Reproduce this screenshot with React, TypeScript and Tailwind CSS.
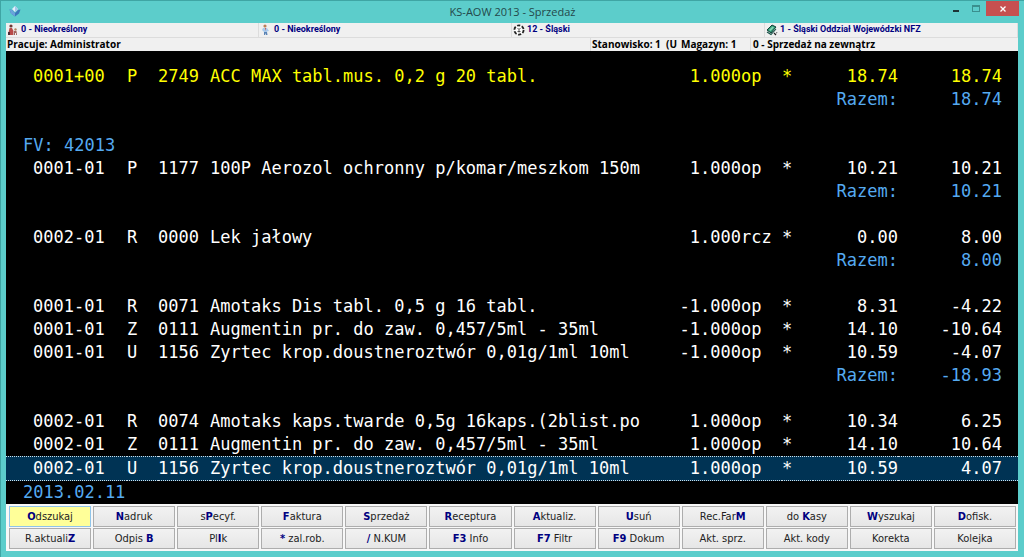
import React from 'react'
import clsx from 'clsx'

type ItemRow = {
  kind: 'item', doc: string, type: string, code: string, name: string,
  qty: string, unit: string, price: string, total: string, tone?: 'new' | 'selected'
}
type SumRow = { kind: 'sum', total: string }
type LabelRow = { kind: 'label', text: string }
type Row = ItemRow | SumRow | LabelRow

const item = (
  doc: string, type: string, code: string, name: string, qty: string,
  unit: string, price: string, total: string, tone?: 'new' | 'selected'
): ItemRow => ({ kind: 'item', doc, type, code, name, qty, unit, price, total, tone })
const sum = (total: string): SumRow => ({ kind: 'sum', total })
const label = (text: string): LabelRow => ({ kind: 'label', text })

const rows: Row[] = [
  item('0001+00', 'P', '2749', 'ACC MAX tabl.mus. 0,2 g 20 tabl.', '1.000', 'op', '18.74', '18.74', 'new'),
  sum('18.74'),
  label(''),
  label('FV: 42013'),
  item('0001-01', 'P', '1177', '100P Aerozol ochronny p/komar/meszkom 150m', '1.000', 'op', '10.21', '10.21'),
  sum('10.21'),
  label(''),
  item('0002-01', 'R', '0000', 'Lek jałowy', '1.000', 'rcz', '0.00', '8.00'),
  sum('8.00'),
  label(''),
  item('0001-01', 'R', '0071', 'Amotaks Dis tabl. 0,5 g 16 tabl.', '-1.000', 'op', '8.31', '-4.22'),
  item('0001-01', 'Z', '0111', 'Augmentin pr. do zaw. 0,457/5ml - 35ml', '-1.000', 'op', '14.10', '-10.64'),
  item('0001-01', 'U', '1156', 'Zyrtec krop.doustneroztwór 0,01g/1ml 10ml', '-1.000', 'op', '10.59', '-4.07'),
  sum('-18.93'),
  label(''),
  item('0002-01', 'R', '0074', 'Amotaks kaps.twarde 0,5g 16kaps.(2blist.po', '1.000', 'op', '10.34', '6.25'),
  item('0002-01', 'Z', '0111', 'Augmentin pr. do zaw. 0,457/5ml - 35ml', '1.000', 'op', '14.10', '10.64'),
  item('0002-01', 'U', '1156', 'Zyrtec krop.doustneroztwór 0,01g/1ml 10ml', '1.000', 'op', '10.59', '4.07', 'selected'),
  label('2013.02.11'),
]

// [before, hotkey, after]
const actions: [string, string, string][] = [
  ['', 'O', 'dszukaj'], ['', 'N', 'adruk'], ['s', 'P', 'ecyf.'], ['', 'F', 'aktura'],
  ['', 'S', 'przedaż'], ['', 'R', 'eceptura'], ['', 'A', 'ktualiz.'], ['', 'U', 'suń'],
  ['Rec.Far', 'M', ''], ['do ', 'K', 'asy'], ['', 'W', 'yszukaj'], ['', 'D', 'ofisk.'],
  ['R.aktuali', 'Z', ''], ['Odpis ', 'B', ''], ['Pl', 'I', 'k'], ['', '*', ' zal.rob.'],
  ['', '/', ' N.KUM'], ['', 'F3', ' Info'], ['', 'F7', ' Filtr'], ['', 'F9', ' Dokum'],
  ['Akt. sprz.', '', ''], ['Akt. kody', '', ''], ['Korekta', '', ''], ['Kolejka', '', ''],
]

const AppIcon = () => (
  <svg viewBox="0 0 12 12" className="h-3 w-3">
    <path d="M0.5 4.5 3 5 6 8 9 5 11.5 4.5 10 8.5 6 11.5 2 8.5Z" fill="#3b76bb" />
    <path d="M0.5 4.5 3 5 6 8V11.5L2 8.5Z" fill="#6aa3db" />
    <path d="M6 1 9 4 6 7 3 4Z" fill="#e4effb" />
    <path d="M6 1 9 4 6 7Z" fill="#a5c6ea" />
  </svg>
)

const PatientIcon = () => (
  <svg viewBox="0 0 12 12" className="h-3 w-3">
    <circle cx="4" cy="2" r="1.6" fill="#6d3a35" />
    <path d="M2.5 4H5L6.5 7 6 11H1Z" fill="#b94a48" />
    <path d="M1 8H3V11H1Z" fill="#4c2b38" />
    <circle cx="8.5" cy="5.5" r="1.2" fill="#b28562" />
    <path d="M7 7H9.5L10 11H9V9H8V11H6.5Z" fill="#a1615b" />
  </svg>
)

const DoctorIcon = () => (
  <svg viewBox="0 0 12 12" className="h-3 w-3">
    <circle cx="5" cy="2" r="1.6" fill="#b98058" />
    <path d="M3 4H7L9 7 7 7.5V8H4L2 6Z" fill="#a9cbed" />
    <path d="M5 4 6 4 5.6 7Z" fill="#c8514b" />
    <path d="M4 8H7L7.5 11H6L5.6 9 5 11H4Z" fill="#5b84b6" />
  </svg>
)

const RegionIcon = () => (
  <svg viewBox="0 0 12 12" className="h-3 w-3">
    <circle cx="6" cy="6" r="4.6" fill="#fff" stroke="#222" strokeWidth="1.8" strokeDasharray="3.2 1.6" />
    <path d="M4.5 4 6 5.5 7.5 4M6 5.5V8.5M4.5 7.5H7.5" fill="none" stroke="#444" strokeWidth="0.9" />
  </svg>
)

const FundIcon = () => (
  <svg viewBox="0 0 12 12" className="h-3 w-3">
    <path d="M1 6 6 1 10 3 5 9Z" fill="#2f9b76" stroke="#123f38" strokeWidth="1" />
    <path d="M3 6 6.5 2.6 8 3.4 4.6 7Z" fill="#86d3b1" />
    <path d="M1 8 5 10.5 10 5" fill="none" stroke="#175248" strokeWidth="1.1" />
    <path d="M8 9 10 11M10.5 8.5 11 9" stroke="#222" strokeWidth="1.2" />
  </svg>
)

const InfoCell = ({ icon, text } : { icon: React.ReactNode, text: string }) => (
  <div className="flex items-center gap-0.5 border-r border-b border-[#dcdcdc] pl-px font-['Roboto',sans-serif] text-[9px] text-[#000080]">
    {icon}
    <span className="whitespace-nowrap">{text}</span>
  </div>
)

const TitleBar = () => (
  <header className="grid h-[22px] grid-cols-[1fr_auto_1fr]">
    <div className="pt-1 pl-2"><AppIcon /></div>
    <h1 className="font-['Open_Sans',sans-serif] text-[11px] leading-[22px] text-[#24484a]">KS-AOW 2013 - Sprzedaż</h1>
    <div className="flex h-[15px] justify-end pr-[5px]">
      <button aria-label="Minimalizuj" className="flex w-5 items-end justify-center pb-1">
        <span className="h-0.5 w-1.5 bg-[#1c3435]"></span>
      </button>
      <button aria-label="Maksymalizuj" className="flex w-5 items-center justify-center">
        <span className="h-[7px] w-2 border border-t-2 border-[#3a8f8e]"></span>
      </button>
      <button aria-label="Zamknij" className="flex w-[33px] items-center justify-center bg-[#c75050]">
        <svg viewBox="0 0 6 6" className="h-1.5 w-1.5">
          <path d="M0.5 0.5 5.5 5.5M5.5 0.5 0.5 5.5" stroke="#fff" strokeWidth="1.3" />
        </svg>
      </button>
    </div>
  </header>
)

const ListRow = ({ row } : { row: Row }) => {
  if (row.kind == 'label') {
    return (
      <tr className="h-[23px] text-[#55aaf0]">
        <td colSpan={9} className="pl-[17px]">{row.text}</td>
      </tr>
    )
  }
  if (row.kind == 'sum') {
    return (
      <tr className="h-[23px] text-right text-[#55aaf0]">
        <td colSpan={7}></td>
        <td>Razem:</td>
        <td className="pr-4">{row.total}</td>
      </tr>
    )
  }
  return (
    <tr className={clsx('h-[23px]',
      row.tone == 'new' && 'text-[#ffff00]',
      row.tone == 'selected' && 'bg-[#003354] [&>td]:border-y [&>td]:border-dotted [&>td]:border-[#d0e0ea]'
    )}>
      <td className="pl-[27px]">{row.doc}</td>
      <td>{row.type}</td>
      <td>{row.code}</td>
      <td>{row.name}</td>
      <td className="text-right">{row.qty}</td>
      <td>{row.unit}</td>
      <td>*</td>
      <td className="text-right">{row.price}</td>
      <td className="pr-4 text-right">{row.total}</td>
    </tr>
  )
}

const App = () => {
  return (
    <div className="flex min-h-screen flex-col border-t border-l border-[#3fa5a4] bg-[#5ccdcb] font-['DejaVu_Sans_Condensed','DejaVu_Sans',sans-serif]">
      <TitleBar />
      <div className="mr-1.5 mb-1.5 ml-[5px] flex flex-1 flex-col bg-[#f0f0f0]">
        <section className="font-['Open_Sans',sans-serif] font-bold">
          <div className="grid h-[15px] grid-cols-4">
            <InfoCell icon={<PatientIcon />} text="0 - Nieokreślony" />
            <InfoCell icon={<DoctorIcon />} text="0 - Nieokreślony" />
            <InfoCell icon={<RegionIcon />} text="12 - Śląski" />
            <InfoCell icon={<FundIcon />} text="1 - Śląski Oddział Wojewódzki NFZ" />
          </div>
          <div className="grid h-[13px] grid-cols-[1fr_89px_71px_268px] text-[10px] leading-[13px] whitespace-nowrap text-black">
            <p className="pl-px">Pracuje: Administrator</p>
            <p className="border-l border-[#dcdcdc] pl-px whitespace-pre">Stanowisko: 1  (U</p>
            <p className="pl-0.5">Magazyn: 1</p>
            <p className="border-l border-[#dcdcdc] pl-0.5">0 - Sprzedaż na zewnątrz</p>
          </div>
        </section>

        <main className="flex-1 bg-black pt-3.5">
          <table className="w-full table-fixed border-separate border-spacing-0 font-['DejaVu_Sans_Mono',monospace] text-[17px] leading-[23px] whitespace-pre text-white">
            <colgroup>
              <col className="w-[121px]" />
              <col className="w-[31px]" />
              <col className="w-[52px]" />
              <col />
              <col className="w-[71px]" />
              <col className="w-[41px]" />
              <col className="w-[31px]" />
              <col className="w-[85px]" />
              <col className="w-[120px]" />
            </colgroup>
            <tbody>
              {rows.map((row, i) => <ListRow key={i} row={row} />)}
            </tbody>
          </table>
        </main>

        <nav className="grid grid-cols-12 gap-x-0.5 gap-y-px bg-[#f8f8f8] py-0.5 pr-0.5 pl-[3px]">
          {actions.map(([before, key, after], i) => (
            <button key={i} className={clsx(
              'h-[21px] border text-[11px] leading-[19px] whitespace-pre text-[#222]',
              i == 0 ? 'border-[#8fc4ea] bg-[#ffff99]' : 'border-[#adadad] bg-linear-to-b from-[#f2f2f2] to-[#e6e6e6]'
            )}>
              {before}<b className="text-[#000080]">{key}</b>{after}
            </button>
          ))}
        </nav>
      </div>
    </div>
  )
}

export default App
